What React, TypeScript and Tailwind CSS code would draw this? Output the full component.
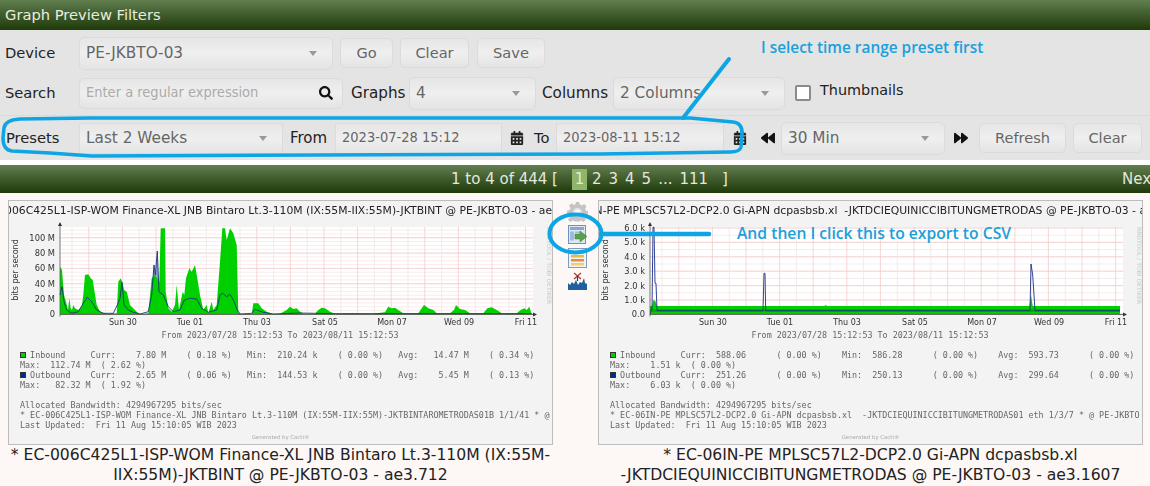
import { FaBackward, FaCalendarAlt, FaForward, FaSearch } from "react-icons/fa";

const sans = "font-['DejaVu_Sans','Noto_Sans',sans-serif]";
const condensed = "[font-stretch:condensed] text-[14.5px]";
const control = "flex items-center bg-linear-to-b from-[#e6e6e6] via-[#efefef] to-[#e4e4e4] border border-[#dbdbdb] text-[#666]";

type Pt = [number, number];

const area1: Pt[] = [
  [180, 358], [180, 215], [186, 225], [192, 300], [198, 320], [204, 345], [208, 310], [212, 340], [216, 345], [220, 330],
  [225, 340], [235, 345], [245, 335], [250, 300], [255, 240], [265, 238], [272, 250], [278, 255], [282, 280], [290, 330],
  [300, 350], [320, 356], [350, 355], [355, 260], [362, 250], [368, 265], [372, 285], [380, 290], [390, 330], [410, 350],
  [420, 357], [445, 355], [455, 250], [465, 240], [478, 260], [482, 100], [495, 100], [497, 290], [505, 340], [515, 350],
  [525, 330], [530, 270], [537, 345], [548, 290], [553, 300], [558, 250], [568, 220], [575, 230], [585, 210], [592, 250],
  [600, 300], [610, 345], [620, 330], [625, 355], [635, 320], [640, 345], [650, 330], [660, 200], [667, 100], [675, 100],
  [680, 135], [690, 100], [700, 115], [710, 150], [715, 350], [720, 357], [755, 357], [760, 325], [775, 325], [785, 340],
  [800, 350], [820, 357], [840, 356], [860, 345], [870, 335], [880, 342], [890, 340], [900, 350], [910, 356], [945, 356],
  [955, 345], [965, 338], [975, 340], [990, 350], [1005, 356], [1050, 355], [1115, 356], [1155, 352], [1165, 335], [1175, 340],
  [1185, 338], [1195, 345], [1210, 355], [1255, 355], [1265, 340], [1272, 330], [1285, 340], [1300, 345], [1310, 355], [1350, 355],
  [1362, 345], [1368, 330], [1380, 342], [1395, 345], [1410, 355], [1450, 355], [1462, 340], [1475, 337], [1490, 345], [1505, 355],
  [1550, 355], [1562, 345], [1573, 340], [1580, 345], [1588, 335], [1595, 358],
];

const line1: Pt[] = [
  [180, 300], [186, 275], [192, 320], [200, 345], [215, 355], [235, 350], [250, 325], [262, 307], [275, 320], [290, 345],
  [310, 355], [340, 355], [352, 330], [360, 310], [366, 262], [372, 330], [385, 345], [400, 352], [420, 357], [445, 350],
  [455, 300], [462, 210], [466, 240], [472, 168], [477, 290], [490, 300], [505, 335], [520, 350], [540, 345], [553, 315],
  [570, 310], [590, 312], [605, 340], [625, 352], [650, 345], [660, 300], [668, 295], [680, 305], [690, 298], [700, 315],
  [712, 345], [720, 357], [755, 355], [765, 343], [790, 352], [820, 357], [900, 354], [1000, 356], [1595, 356],
];

const area2: Pt[] = [
  [180, 358], [180, 333], [186, 333], [190, 315], [196, 318], [201, 333], [703, 333], [707, 330], [711, 333], [1318, 333],
  [1323, 300], [1328, 333], [1590, 333], [1590, 358],
];

const line2: Pt[] = [
  [181, 358], [183, 345], [186, 345], [189, 97], [192, 97], [195, 265], [198, 265], [201, 347], [519, 347], [522, 235],
  [525, 235], [527, 347], [1320, 347], [1323, 207], [1328, 240], [1332, 300], [1335, 347], [1590, 347],
];

// points were read off the reference at 3x, so bring them back to the svg's own coordinates
const toPoints = (pts: Pt[]) => pts.map(([x, y]) => `${(x / 3 - 9).toFixed(1)},${(y / 3 - 27).toFixed(1)}`).join(" ");

const dayLabels = [
  { x: 114, t: "Sun 30" },
  { x: 181, t: "Tue 01" },
  { x: 248, t: "Thu 03" },
  { x: 316, t: "Sat 05" },
  { x: 383, t: "Mon 07" },
  { x: 450, t: "Wed 09" },
  { x: 517, t: "Fri 11" },
];

function Chart({ yLabels, step, minor, children }: { yLabels: string[]; step: number; minor: number; children: React.ReactNode }) {
  const zero = 92.4;
  const minors = Array.from({ length: Math.floor(87 / minor) }, (_, i) => zero - minor * (i + 1));
  const verticals = Array.from({ length: 28 }, (_, i) => 63 + 16.8 * i);
  return (
    <svg width="543" height="120" viewBox="0 0 543 120" className="block font-['DejaVu_Sans',sans-serif]">
      <rect x="51" y="5" width="473" height="87.4" fill="#fff" />
      {minors.map((y) => (
        <line key={y} x1="51" x2="524" y1={y} y2={y} stroke="#f6e4e4" strokeWidth="0.7" />
      ))}
      {yLabels.map((_, i) => (
        <line key={i} x1="51" x2="524" y1={zero - step * i} y2={zero - step * i} stroke="#f5c9c9" strokeWidth="0.7" />
      ))}
      {verticals.map((x, i) => (
        <line key={x} x1={x} x2={x} y1="5" y2={zero} stroke={i % 2 ? "#f5cccc" : "#eee6e6"} strokeWidth="0.8" />
      ))}
      {children}
      <line x1="51" x2="527" y1={zero} y2={zero} stroke="#444" strokeWidth="0.8" />
      <line x1="51" x2="51" y1="2" y2={zero + 2} stroke="#555" strokeWidth="0.8" />
      <polygon points="49,4 53,4 51,0" fill="#333" />
      <polygon points="524,90.4 524,94.4 528,92.4" fill="#333" />
      {yLabels.map((t, i) => (
        <text key={t} x="46" y={zero - step * i + 3} textAnchor="end" fontSize="8.3" fill="#333">
          {t}
        </text>
      ))}
      <text transform="translate(9 48) rotate(-90)" textAnchor="middle" fontSize="8" fill="#333">
        bits per second
      </text>
      {dayLabels.map((d) => (
        <text key={d.t} x={d.x} y="102.5" textAnchor="middle" fontSize="8" fill="#333">
          {d.t}
        </text>
      ))}
      <text x="271" y="116" textAnchor="middle" fontSize="8.4" fill="#666" className="font-['DejaVu_Sans_Mono',monospace]">
        From 2023/07/28 15:12:53 To 2023/08/11 15:12:53
      </text>
      <text transform="translate(538 5) rotate(90)" fontSize="6" fill="#c9c9c9">
        RRDTOOL / TOBI OETIKER
      </text>
    </svg>
  );
}

function Swatch({ color }: { color: string }) {
  return (
    <span className="inline-block w-[10.1px]">
      <span className="inline-block size-[6px] border border-[#333] align-[-0.5px]" style={{ backgroundColor: color }} />
    </span>
  );
}

function GraphCard({ title, caption, chart, lines, source }: { title: string; caption: string[]; chart: React.ReactNode; lines: string[]; source: string }) {
  return (
    <div className="w-[545px] shrink-0">
      <div className="h-[245px] border border-[#bdbdbd] bg-[#f3f3f3] overflow-hidden blur-[0.35px]">
        <div className="flex h-[21px] items-center justify-center overflow-hidden whitespace-pre font-['DejaVu_Sans',sans-serif] text-[10.8px] text-[#222]">
          <span className="shrink-0">{title}</span>
        </div>
        {chart}
        <div className="overflow-hidden whitespace-pre pl-[11px] pt-[7.5px] font-['DejaVu_Sans_Mono',monospace] text-[8.4px] leading-[10.1px] text-[#666]">
          <div><Swatch color="#00cf00" />{lines[0]}</div>
          <div>{lines[1]}</div>
          <div><Swatch color="#002a97" />{lines[2]}</div>
          <div>{lines[3]}</div>
          <div>&nbsp;</div>
          <div>Allocated Bandwidth: 4294967295 bits/sec</div>
          <div>{source}</div>
          <div>Last Updated:  Fri 11 Aug 15:10:05 WIB 2023</div>
        </div>
        <div className="pt-[3px] text-center font-['DejaVu_Sans',sans-serif] text-[5.4px] text-[#aaa]">Generated by Cacti®</div>
      </div>
      <div className="pt-[1px] text-center text-[15.6px] leading-[19.5px] text-[#222] whitespace-nowrap">
        {caption.map((c) => (
          <div key={c}>{c}</div>
        ))}
      </div>
    </div>
  );
}

function Select({ label, className }: { label: string; className: string }) {
  return (
    <div className={`${control} justify-between rounded-[5px] pl-[6px] pr-[15px] shrink-0 text-[15.3px] ${className}`}>
      <span>{label}</span>
      <span className="h-0 w-0 border-x-[4px] border-t-[5px] border-x-transparent border-t-[#999]" />
    </div>
  );
}

function Btn({ label, className }: { label: string; className: string }) {
  return <div className={`${control} h-[30px] shrink-0 justify-center rounded-[5px] text-[14.6px] ${className}`}>{label}</div>;
}

function ToolIcons() {
  return (
    <div className="flex w-[45px] shrink-0 flex-col items-center pl-[4px] pt-[1px] blur-[0.3px]">
      <svg width="21" height="21" viewBox="0 0 24 24">
        <path
          d="M10 1h4l.6 3 2.4 1 2.6-1.7 2.8 2.8L20.7 8.7l1 2.3 2.3.6v4l-3 .6-1 2.4 1.700 2.600-2.800 2.800-2.600-1.700-2.300 1-.6 0h-4l-.6-.1-2.400-1-2.600 1.700-2.800-2.800L4 18l-1-2.400-3-.6v-4l3-.6 1-2.400-1.700-2.600L5.100 2.600 7.700 4.300 10 3.300z"
          fill="#c4c4c4"
        />
        <circle cx="12" cy="13" r="5" fill="#e6e6e6" />
        <circle cx="12" cy="13" r="3" fill="#fdf8f6" />
      </svg>
      <svg width="19" height="19" viewBox="0 0 19 19" className="mt-[3px]">
        <rect x="0.5" y="0.5" width="17" height="18" fill="#dce8f4" stroke="#6f93bd" />
        <rect x="2" y="2" width="14" height="3" fill="#86a9cf" />
        <rect x="2" y="6.500" width="4" height="9" fill="#9dbbdb" />
        <rect x="7" y="6.500" width="6" height="1.500" fill="#9dbbdb" />
        <path d="M7 9h5V6l7 5.500L12 17v-3H7z" fill="#5ba04e" stroke="#3f7d37" strokeWidth="0.5" />
      </svg>
      <svg width="19" height="20" viewBox="0 0 19 20" className="mt-[4px]">
        <rect x="0.5" y="0.5" width="18" height="19" fill="#f6f4ea" stroke="#7c9cc0" />
        <rect x="3" y="3" width="13" height="2.500" fill="#7fa866" />
        <rect x="3" y="7" width="13" height="2.500" fill="#e6b94f" />
        <rect x="3" y="11" width="13" height="2.500" fill="#e58a4b" />
        <rect x="3" y="15" width="13" height="2.500" fill="#e9cf79" />
      </svg>
      <svg width="19" height="18" viewBox="0 0 19 18" className="mt-[4px]">
        <path d="M6 1l7 6M13 1L6 7" stroke="#b23a3a" strokeWidth="1.300" />
        <path d="M9.500 4v5" stroke="#1d3f7a" strokeWidth="1.200" />
        <path d="M0 18v-7l2 2 2-3 2 2 2-4 2 5 2-3 2 1 2-5 1 5 2 1v6z" fill="#1f5f9f" />
      </svg>
    </div>
  );
}

function Annotations() {
  return (
    <>
      <svg width="1150" height="486" className="pointer-events-none absolute inset-0" fill="none" stroke="#0ea5e4" strokeLinecap="round" strokeLinejoin="round">
        <path
          d="M90 118 L690 118 L733 122 Q743 123 742 135 L741 147 Q740 152 730 152 L600 154 L92 156 L50 153 L12 151 Q3 150 3 138 L4 128 Q5 120 20 119 Z"
          strokeWidth="3.500"
        />
        <path d="M683 118 L729 59" strokeWidth="4" />
        <ellipse cx="575.500" cy="233.500" rx="26" ry="19" strokeWidth="4" />
        <path d="M601 234 L709 234" strokeWidth="4.500" />
      </svg>
      <div className="absolute left-[761px] top-[38px] font-['Open_Sans',sans-serif] text-[15.4px] font-semibold leading-[20px] text-[#1aa0dc] whitespace-nowrap">
        I select time range preset first
      </div>
      <div className="absolute left-[737px] top-[223px] font-['Open_Sans',sans-serif] text-[15.7px] font-semibold leading-[20px] text-[#1aa0dc] whitespace-nowrap">
        And then I click this to export to CSV
      </div>
    </>
  );
}

export default function App() {
  return (
    <div className={`${sans} relative h-[486px] w-[1150px] overflow-hidden bg-[#fdf8f6] text-[14.7px] text-[#222]`}>
      <div className="flex h-[30px] items-center bg-linear-to-b from-[#627f50] to-[#1f3a08] pl-[5px] text-[#e8ecdf]">
        Graph Preview Filters
      </div>

      <div className="h-[130px] bg-[#e4e4e4]">
        <div className="flex h-[46px] items-center pl-[5px]">
          <span className="w-[74px] shrink-0">Device</span>
          <Select label="PE-JKBTO-03" className="h-[33px] w-[254px]" />
          <Btn label="Go" className="ml-[7px] w-[53px]" />
          <Btn label="Clear" className="ml-[7px] w-[69px]" />
          <Btn label="Save" className="ml-[8px] w-[68px]" />
        </div>

        <div className="flex h-[34px] items-center pl-[5px]">
          <span className="w-[74px] shrink-0">Search</span>
          <div className={`${control} ${condensed} h-[31px] w-[264px] shrink-0 justify-between rounded-[5px] pl-[6px] pr-[9px] !text-[#aaa]`}>
            <span>Enter a regular expression</span>
            <FaSearch className="text-[14px] text-[#111]" />
          </div>
          <span className="ml-[8px] w-[58px] shrink-0 text-[15.2px]">Graphs</span>
          <Select label="4" className="h-[33px] w-[127px]" />
          <span className="ml-[6px] w-[71px] shrink-0 text-[15.2px]">Columns</span>
          <Select label="2 Columns" className="h-[33px] w-[172px]" />
          <span className="ml-[10px] size-[16px] shrink-0 rounded-[2px] border-2 border-[#8b8b8b] bg-white" />
          <span className="ml-[9px] -translate-y-[2px] text-[14.4px]">Thumbnails</span>
        </div>

        <div className="mt-[5px] flex h-[45px] items-center border-t border-[#dadada] pl-[6px]">
          <span className="w-[73px] shrink-0">Presets</span>
          <Select label="Last 2 Weeks" className="h-[31px] w-[204px] !rounded-none" />
          <span className="ml-[7px] w-[45px] shrink-0 text-[15px]">From</span>
          <div className={`${control} ${condensed} h-[31px] w-[167px] shrink-0 pl-[6px]`}>2023-07-28 15:12</div>
          <FaCalendarAlt className="ml-[8px] shrink-0 text-[14px] text-[#222]" />
          <span className="ml-[10px] w-[22px] shrink-0">To</span>
          <div className={`${control} ${condensed} h-[31px] w-[168px] shrink-0 pl-[6px]`}>2023-08-11 15:12</div>
          <FaCalendarAlt className="ml-[9px] shrink-0 text-[14px] text-[#222]" />
          <FaBackward className="ml-[14px] shrink-0 text-[14px] text-[#111]" />
          <Select label="30 Min" className="ml-[6px] h-[33px] w-[164px]" />
          <FaForward className="ml-[9px] shrink-0 text-[14px] text-[#111]" />
          <Btn label="Refresh" className="ml-[11px] w-[87px]" />
          <Btn label="Clear" className="ml-[7px] w-[69px]" />
        </div>
      </div>

      <div className="h-[5px] bg-white" />

      <div className="flex h-[28px] items-center justify-between bg-linear-to-b from-[#627f50] to-[#1f3a08] pl-[451px] text-[15px] text-[#e4e8dc]">
        <div className="flex items-center whitespace-pre">
          <span>1 to 4 of 444 [</span>
          <span className="ml-[14px] flex h-[21px] w-[15px] items-center justify-center bg-[#8fb56b]">1</span>
          <span className="ml-[5px] flex gap-[7px]">
            <span>2</span>
            <span>3</span>
            <span>4</span>
            <span>5</span>
            <span>...</span>
            <span>111</span>
          </span>
          <span className="ml-[14px]">]</span>
        </div>
        <div className="w-[28px] overflow-hidden whitespace-nowrap">Next</div>
      </div>

      <div className="flex pl-[8px] pt-[7px]">
        <GraphCard
          title="* EC-006C425L1-ISP-WOM Finance-XL JNB Bintaro Lt.3-110M (IX:55M-IIX:55M)-JKTBINT @ PE-JKBTO-03 - ae3.712"
          caption={["* EC-006C425L1-ISP-WOM Finance-XL JNB Bintaro Lt.3-110M (IX:55M-", "IIX:55M)-JKTBINT @ PE-JKBTO-03 - ae3.712"]}
          chart={
            <Chart yLabels={["0", "20 M", "40 M", "60 M", "80 M", "100 M"]} step={15.33} minor={3.83}>
              <polygon points={toPoints([[455, 300], [462, 210], [466, 240], [472, 168], [477, 290]])} fill="#8f9fd8" />
              <polygon points={toPoints(area1)} fill="#00cf00" />
              <polyline points={toPoints(line1)} fill="none" stroke="#123a6e" strokeWidth="0.9" />
            </Chart>
          }
          lines={[
            "Inbound     Curr:    7.80 M    ( 0.18 %)   Min:  210.24 k    ( 0.00 %)   Avg:   14.47 M    ( 0.34 %)",
            "Max:  112.74 M  ( 2.62 %)",
            "Outbound    Curr:    2.65 M    ( 0.06 %)   Min:  144.53 k    ( 0.00 %)   Avg:    5.45 M    ( 0.13 %)",
            "Max:   82.32 M  ( 1.92 %)",
          ]}
          source="* EC-006C425L1-ISP-WOM Finance-XL JNB Bintaro Lt.3-110M (IX:55M-IIX:55M)-JKTBINTAROMETRODAS01B 1/1/41 * @"
        />
        <ToolIcons />
        <GraphCard
          title="* EC-06IN-PE MPLSC57L2-DCP2.0 Gi-APN dcpasbsb.xl  -JKTDCIEQUINICCIBITUNGMETRODAS @ PE-JKBTO-03 - ae3.1607"
          caption={["* EC-06IN-PE MPLSC57L2-DCP2.0 Gi-APN dcpasbsb.xl", "-JKTDCIEQUINICCIBITUNGMETRODAS @ PE-JKBTO-03 - ae3.1607"]}
          chart={
            <Chart yLabels={["0.0", "1.0 k", "2.0 k", "3.0 k", "4.0 k", "5.0 k", "6.0 k"]} step={14.4} minor={7.2}>
              <polygon points={toPoints(area2)} fill="#00cf00" />
              <polygon points={toPoints([[181, 343], [1590, 343], [1590, 350], [181, 350]])} fill="#00a500" />
              <polyline points={toPoints(line2)} fill="none" stroke="#1c2f8a" strokeWidth="0.9" />
            </Chart>
          }
          lines={[
            "Inbound     Curr:  588.06      ( 0.00 %)    Min:  586.28      ( 0.00 %)    Avg:  593.73      ( 0.00 %)",
            "Max:    1.51 k  ( 0.00 %)",
            "Outbound    Curr:  251.26      ( 0.00 %)    Min:  250.13      ( 0.00 %)    Avg:  299.64      ( 0.00 %)",
            "Max:    6.03 k  ( 0.00 %)",
          ]}
          source="* EC-06IN-PE MPLSC57L2-DCP2.0 Gi-APN dcpasbsb.xl  -JKTDCIEQUINICCIBITUNGMETRODAS01 eth 1/3/7 * @ PE-JKBTO"
        />
      </div>

      <Annotations />
    </div>
  );
}
